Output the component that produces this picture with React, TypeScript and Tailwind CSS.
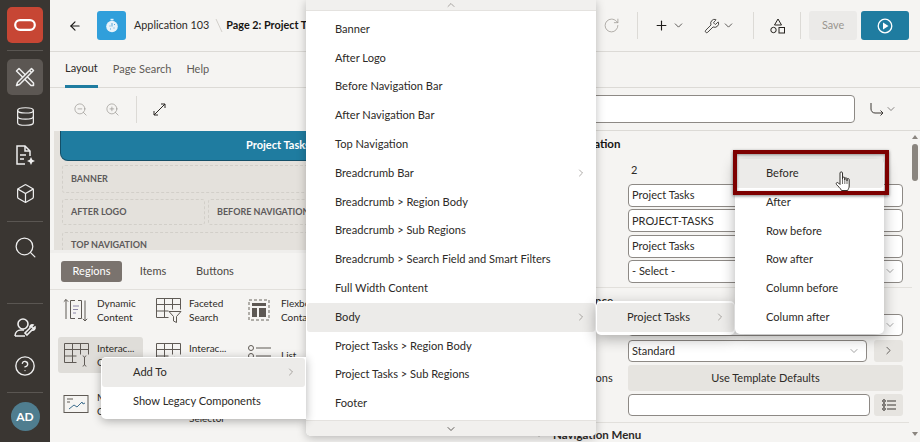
import React from "react";
import { ChevronDown, ChevronRight, ChevronUp, ArrowLeft, RotateCw, Plus, Wrench, ZoomIn, ZoomOut, Database, Box, Search, CircleHelp } from "lucide-react";

const font = "font-['Lato','Noto_Sans',sans-serif]";

function Logo() {
  return <svg width="22" height="12" viewBox="0 0 22 12" fill="none"><rect x="1.2" y="1.2" width="19.6" height="9.6" rx="4.8" stroke="#fff" strokeWidth="2.2" /></svg>;
}
function ToolsIcon() {
  return (
    <svg width="20" height="20" viewBox="0 0 20 20" fill="none" stroke="#eee" strokeWidth="1.5" strokeLinejoin="round">
      <path d="M1.500 4L4 1.500 18.500 16v2.500H16z" />
      <path d="M16.500 1.500l2 2L4.500 17.500 1.500 18.500l1-3z" fill="#5c5753" />
      <path d="M14.500 3.500l2 2" />
    </svg>
  );
}
function DocSpark() {
  return (
    <svg width="22" height="22" viewBox="0 0 22 22" fill="none" stroke="#eee" strokeWidth="1.5">
      <path d="M11 20H3V2h8l5 5v5" /><path d="M11 2v5h5" /><path d="M6 11h6M6 15h4" />
      <path d="M17 13l1.300 2.700L21 17l-2.700 1.300L17 21l-1.300-2.700L13 17l2.700-1.300z" fill="#eee" stroke="none" />
    </svg>
  );
}
function UserWrench() {
  return (
    <svg width="24" height="22" viewBox="0 0 24 22" fill="none" stroke="#eee" strokeWidth="1.6">
      <circle cx="10" cy="7" r="5" /><path d="M2 19c0-4 3-6 6-6h3M2 19h10" />
      <path d="M14 18l5-5c2 .5 3.500-1 3-3l-2 1.500-1.500-1.500 1.500-2c-2-.5-3.500 1-3 3l-5 5z" />
    </svg>
  );
}
function Grid({ children }: { children?: React.ReactNode }) {
  return (
    <svg width="28" height="26" viewBox="0 0 28 26" fill="none" stroke="#5f5a55" strokeWidth="1">
      <path d="M1.500 1.500h24v11M1.500 1.500v19h12M9.500 1.500v19M17.500 1.500v11M1.500 7.500h24M1.500 14h12" />
      {children}
    </svg>
  );
}

function Tile({ active, icon, lines }: { active?: boolean; icon: React.ReactNode; lines: string[] }) {
  return (
    <div className={`flex items-center gap-[5px] h-[36px] w-[85px] shrink-0 rounded-[3px] pl-[5px] ${active ? "bg-[#dfddd9]" : ""}`}>
      <div className="w-[29px] shrink-0 flex justify-start">{icon}</div>
      <div className="text-[10px] leading-[14px] text-[#2d2a27] whitespace-nowrap">
        {lines.map((l) => <div key={l}>{l}</div>)}
      </div>
    </div>
  );
}

function Slot({ label, className = "" }: { label: string; className?: string }) {
  return (
    <div className={`border border-dashed border-[#d2cfc9] rounded-[3px] flex items-center pl-[8px] text-[9px] font-bold text-[#5d5a5a] whitespace-nowrap overflow-hidden ${className}`}>
      {label}
    </div>
  );
}

function Field({ value, w = "w-[275px]", chev, h = "h-[23px]" }: { value: string; w?: string; chev?: boolean; h?: string }) {
  return (
    <div className={`${w} ${h} shrink-0 bg-white border border-[#8d8985] rounded-[4px] flex items-center justify-between px-[3px] text-[11px] text-[#2d2a27]`}>
      <span>{value}</span>
      {chev && <ChevronDown size={12} strokeWidth={1.2} className="mr-[3px] text-[#666]" />}
    </div>
  );
}

function Row({ label, indent, children }: { label?: string; indent?: boolean; children: React.ReactNode }) {
  return (
    <div className="flex shrink-0 items-center">
      <div className={`w-[76px] shrink-0 whitespace-nowrap ${indent ? "pl-[22px]" : ""}`}>{label}</div>
      {children}
    </div>
  );
}

function MenuItem({ label, active, arrow, h = "h-[28.8px]", pl = "pl-[28px]" }: { label: string; active?: boolean; arrow?: boolean; h?: string; pl?: string }) {
  return (
    <div className={`${h} ${pl} mx-[1px] shrink-0 flex items-center justify-between pr-[8px] text-[11.1px] text-[#2d2a27] whitespace-nowrap rounded-[3px] ${active ? "bg-[#ecebe9]" : ""}`}>
      <span>{label}</span>
      {arrow && <ChevronRight size={12} strokeWidth={1.2} className="text-[#77726d]" />}
    </div>
  );
}

export default function App() {
  return (
    <div className={`relative w-[920px] h-[442px] overflow-hidden flex bg-[#f5f4f2] ${font}`}>
      {/* Rail */}
      <aside className="w-[50px] shrink-0 bg-[#3a3632] flex flex-col items-center text-[#eeeeee]">
        <div className="mt-[7px] w-[36px] h-[36px] rounded-[5px] bg-[#c74634] flex items-center justify-center"><Logo /></div>
        <div className="w-[36px] h-px bg-[#5a5652] mt-[7px]" />
        <div className="mt-[8px] w-[36px] h-[36px] rounded-[5px] bg-[#5c5753] flex items-center justify-center"><ToolsIcon /></div>
        <div className="mt-[8px] h-[26px] flex items-center"><Database size={21} strokeWidth={1.4} /></div>
        <div className="mt-[14px] h-[24px] flex items-center"><DocSpark /></div>
        <div className="mt-[15px] h-[22px] flex items-center"><Box size={21} strokeWidth={1.4} /></div>
        <div className="w-[36px] h-px bg-[#5a5652] mt-[17px]" />
        <div className="mt-[13px] h-[24px] flex items-center"><Search size={25} strokeWidth={1.2} /></div>
        <div className="w-[36px] h-px bg-[#5a5652] mt-[44px]" />
        <div className="mt-[12px] h-[24px] flex items-center"><UserWrench /></div>
        <div className="mt-[14px] h-[24px] flex items-center"><CircleHelp size={22} strokeWidth={1.5} /></div>
        <div className="w-[36px] h-px bg-[#5a5652] mt-[14px]" />
        <div className="mt-[9px] w-[29px] h-[29px] shrink-0 rounded-full bg-[#4f7d8f] flex items-center justify-center text-[12px] font-bold text-white">AD</div>
      </aside>

      <div className="flex-1 min-w-0 flex flex-col">
        {/* Header */}
        <header className="h-[52px] shrink-0 border-b border-[#dcdad6] flex items-center text-[10.8px] text-[#2d2a27]">
          <ArrowLeft size={14} strokeWidth={2} className="ml-[18px] text-[#1a1816]" />
          <div className="ml-[15px] w-[29px] h-[29px] rounded-[3px] bg-[#309fdb] flex items-center justify-center">
            <svg width="14" height="15" viewBox="0 0 14 15"><circle cx="7" cy="8.500" r="5.800" fill="#e8f3fa" /><rect x="5.500" y="0.800" width="3" height="1.600" fill="#e8f3fa" /><path d="M7 5v3.500M4.500 8h1M8.500 10h1M5 11h1M9 6.500h1" stroke="#5ba9d8" strokeWidth="1" /></svg>
          </div>
          <span className="ml-[8px] whitespace-nowrap">Application 103</span>
          <svg width="8" height="13" viewBox="0 0 8 13" className="ml-[6px]" fill="none" stroke="#d2cfca"><path d="M1 0l6 13" /></svg>
          <span className="ml-[3px] font-bold whitespace-nowrap text-[#161513]">Page 2: Project Tasks</span>
          <div className="flex-1" />
          <RotateCw size={17} strokeWidth={1.1} className="text-[#9f9b96]" />
          <div className="w-px h-[27px] bg-[#dcdad6] ml-[17px]" />
          <Plus size={15} strokeWidth={1.8} className="ml-[16px] text-[#1f1d1b]" />
          <ChevronDown size={13} strokeWidth={1.4} className="ml-[3px]" />
          <Wrench size={16} strokeWidth={1.2} className="ml-[19px] text-[#1f1d1b]" />
          <ChevronDown size={13} strokeWidth={1.4} className="ml-[2px]" />
          <div className="w-px h-[27px] bg-[#dcdad6] ml-[18px]" />
          <svg width="16" height="16" viewBox="0 0 16 16" fill="none" stroke="#26231f" strokeWidth="1" className="ml-[16px]"><path d="M8 1l3.500 6h-7z" /><circle cx="3.500" cy="12" r="2.700" /><rect x="9" y="9.500" width="5.500" height="5.500" /></svg>
          <div className="w-px h-[27px] bg-[#dcdad6] ml-[14px]" />
          <div className="ml-[8px] w-[48px] h-[29px] rounded-[3px] bg-[#ebeae8] text-[#99958f] flex items-center justify-center">Save</div>
          <div className="ml-[4px] mr-[11px] w-[48px] h-[29px] rounded-[3px] bg-[#1f7ca0] flex items-center justify-center">
            <svg width="16" height="16" viewBox="0 0 16 16" fill="none"><circle cx="8" cy="8" r="6.800" stroke="#fff" strokeWidth="1.300" /><path d="M6 4.500l5.500 3.500L6 11.500z" fill="#fff" /></svg>
          </div>
        </header>

        <div className="flex-1 min-h-0 flex">
          {/* Left pane */}
          <div className="w-[480px] shrink-0 flex flex-col">
            <div className="h-[36px] shrink-0 border-b border-[#dcdad6] flex text-[11px] text-[#5f5b57] pl-[15px] gap-[15px]">
              <div className="h-[36px] border-b-[3px] border-[#1f7ca0] flex items-center text-[#2d2a27]">Layout</div>
              <div className="h-[35px] flex items-center">Page Search</div>
              <div className="h-[35px] flex items-center">Help</div>
            </div>
            <div className="h-[43px] shrink-0 flex items-center pl-[23px]">
              <ZoomOut size={15} strokeWidth={1} className="text-[#8f8b86]" />
              <ZoomIn size={15} strokeWidth={1} className="ml-[17px] text-[#8f8b86]" />
              <div className="ml-[16px] w-px h-[27px] bg-[#dcdad6]" />
              <svg width="13" height="13" viewBox="0 0 13 13" fill="none" stroke="#2b2724" strokeWidth="1" className="ml-[16px]"><path d="M1 12l11-11M8 1h4v4M1 8v4h4" /></svg>
            </div>
            {/* Canvas */}
            <div className="h-[119px] shrink-0 ml-[4px] bg-[#e4e1dc] pl-[6px] overflow-hidden flex flex-col">
              <div className="h-[30px] shrink-0 bg-[#1f7ca0] rounded-b-[8px] border border-t-0 border-[#144f68] flex items-center justify-center text-white font-bold text-[11px] w-[436px]">Project Tasks</div>
              <Slot label="BANNER" className="mt-[4px] h-[28px] shrink-0 w-[440px] ml-[2px]" />
              <div className="flex mt-[6px] shrink-0 ml-[2px] gap-[3px]">
                <Slot label="AFTER LOGO" className="h-[26px] w-[143px]" />
                <Slot label="BEFORE NAVIGATION BAR" className="h-[26px] w-[143px]" />
              </div>
              <Slot label="TOP NAVIGATION" className="mt-[7px] h-[26px] shrink-0 w-[440px] ml-[2px]" />
            </div>
            {/* Gallery */}
            <div className="flex-1 min-h-0 border-t-[3px] border-[#efeeec] flex flex-col">
              <div className="h-[37px] shrink-0 border-b border-[#e2e0dc] flex items-center pl-[11px] text-[11px] text-[#4b4743]">
                <div className="h-[21px] w-[61px] rounded-[3px] bg-[#7a736e] text-white flex items-center justify-center">Regions</div>
                <div className="h-[21px] w-[62px] flex items-center justify-center">Items</div>
                <div className="h-[21px] w-[62px] flex items-center justify-center">Buttons</div>
              </div>
              <div className="flex-1 min-h-0 flex flex-col pl-[8px] pt-[2px]">
                <div className="flex gap-[7px]">
                  <Tile lines={["Dynamic", "Content"]} icon={<svg width="26" height="26" viewBox="0 0 26 26" fill="none" stroke="#5f5a55"><path d="M3 22V2.500M.8 4.700L3 2.500l2.200 2.200M22 3.500V24M19.800 21.800L22 24l2.200-2.200" /><path d="M12 3.500H7.500v18H12M15 3.500h3.500v18H15" /><path d="M10 9h6M10 12.500h5M10 16h3" stroke="#8c86a8" /></svg>} />
                  <Tile lines={["Faceted", "Search"]} icon={<Grid><path d="M14 14.500h12l-4.500 5v6l-3-1.500v-4.500z" /></Grid>} />
                  <Tile lines={["Flexbox", "Container"]} icon={<svg width="24" height="24" viewBox="0 0 24 24" fill="none"><rect x="2" y="2" width="20" height="20" stroke="#6b665f" strokeDasharray="3 2" /><rect x="5" y="5" width="14" height="3" fill="#5d5853" /><rect x="5" y="10" width="5" height="9" fill="#5d5853" /><rect x="12" y="10" width="7" height="9" fill="#5d5853" /></svg>} />
                </div>
                <div className="flex gap-[7px] mt-[9px]">
                  <Tile active lines={["Interac...", "Grid"]} icon={<Grid><path d="M20 13.500c0 1 1 1.500 1.500 1.500s1.500-.5 1.500-1.500M21.500 15v8M20 24.500c0-1 1-1.500 1.500-1.500s1.500.5 1.500 1.500" /></Grid>} />
                  <Tile lines={["Interac...", "Report"]} icon={<Grid><path d="M19 15l5 4-5 4z" /></Grid>} />
                  <Tile lines={["List"]} icon={<svg width="26" height="22" viewBox="0 0 26 22" fill="none" stroke="#5f5a55"><circle cx="4" cy="4" r="2.500" /><circle cx="4" cy="12" r="2.500" /><path d="M9 4h15M9 12h15M9 20h15" /></svg>} />
                </div>
                <div className="flex gap-[7px] mt-[13px]">
                  <Tile lines={["Map", "Chart"]} icon={<svg width="26" height="20" viewBox="0 0 26 20" fill="none" stroke="#5f5a55"><rect x="1" y="1.500" width="24" height="17" /><path d="M4 5h6M4 8h3" /><path d="M6 15l5-4 3 2 5-5 1 2 2-1" stroke="#3f6f8f" /></svg>} />
                  <Tile lines={["Region", "Display", "Selector"]} icon={null} />
                </div>
              </div>
            </div>
          </div>

          {/* Right pane */}
          <div className="flex-1 min-w-0 flex flex-col">
            <div className="h-[36px] shrink-0 border-b border-[#dcdad6]" />
            <div className="h-[43px] shrink-0 flex items-center border-b border-[#dcdad6] pl-[10px]">
              <div className="w-[315px] h-[28px] bg-white border border-[#8d8985] rounded-[4px]" />
              <svg width="14" height="14" viewBox="0 0 14 14" fill="none" stroke="#3c3835" strokeWidth="1" className="ml-[15px]"><path d="M1 1v6c0 2 1.500 4 4 4h8M10.500 8.500L13 11l-2.500 2.500" /></svg>
              <ChevronDown size={12} strokeWidth={1.2} className="ml-[1px] text-[#3c3835]" />
            </div>
            <div className="flex-1 min-h-0 flex overflow-hidden">
              <div className="flex-1 min-w-0 pl-[22px] flex flex-col text-[11px] text-[#2d2a27]">
                <div className="h-[25px] shrink-0 font-bold text-[11.5px] pt-[4px] text-[#161513] whitespace-nowrap">Identification</div>
                <Row><div className="h-[28px] pl-[3px] flex items-center">2</div></Row>
                <div className="flex flex-col gap-[2.300px] shrink-0 pb-[4px] border-b border-[#e2e0dc] w-[360px]">
                  <Row><Field value="Project Tasks" /></Row>
                  <Row><Field value="PROJECT-TASKS" /></Row>
                  <Row><Field value="Project Tasks" /></Row>
                  <Row><Field value="- Select -" chev /></Row>
                </div>
                <div className="h-[26px] shrink-0 font-bold text-[11.5px] flex items-center whitespace-nowrap">Appearance</div>
                <div className="flex flex-col shrink-0">
                  <Row><Field value="" chev h="h-[22px]" /></Row>
                  <div className="mt-[4px]"><Row label="Template">
                    <Field value="Standard" chev w="w-[239px]" h="h-[22px]" />
                    <div className="ml-[7px] w-[29px] h-[22px] rounded-[3px] bg-[#e6e4e0] flex items-center justify-center"><ChevronRight size={13} strokeWidth={1.3} /></div>
                  </Row></div>
                  <div className="mt-[3px]"><Row label="Options" indent>
                    <div className="h-[26px] w-[275px] rounded-[3px] bg-[#e6e4e0] flex items-center justify-center">Use Template Defaults</div>
                  </Row></div>
                  <div className="mt-[3px]"><Row>
                    <Field value="" w="w-[242px]" h="h-[22px]" />
                    <div className="ml-[4px] w-[29px] h-[22px] rounded-[3px] bg-[#e6e4e0] flex items-center justify-center">
                      <svg width="14" height="12" viewBox="0 0 14 12" fill="none" stroke="#3c3835"><circle cx="2" cy="2" r="1.300" /><circle cx="2" cy="6" r="1.300" /><circle cx="2" cy="10" r="1.300" /><path d="M5 2h9M5 6h9M5 10h9" /></svg>
                    </div>
                  </Row></div>
                </div>
                <div className="mt-[6px] shrink-0 border-t border-[#e2e0dc] -ml-[18px] pt-[3px] w-[375px] font-bold text-[11.5px] flex items-center gap-[9px] whitespace-nowrap">
                  <ChevronDown size={10} strokeWidth={1.5} /> Navigation Menu
                </div>
              </div>
              <div className="w-[9px] shrink-0 mr-[1px] flex flex-col items-center pt-[4px] justify-between pb-[6px]">
                <div className="flex flex-col items-center gap-[5px]">
                  <div className="w-0 h-0 border-x-[3px] border-x-transparent border-b-[4px] border-b-[#8a857f]" />
                  <div className="w-[6px] h-[37px] rounded-[3px] bg-[#8a857f]" />
                </div>
                <div className="w-0 h-0 border-x-[3px] border-x-transparent border-t-[4px] border-t-[#8a857f]" />
              </div>
            </div>
          </div>
        </div>
      </div>

      {/* Main dropdown menu */}
      <div className="absolute left-[306px] top-0 w-[290px] h-[436px] bg-white rounded-b-[5px] shadow-[0_2px_10px_rgba(0,0,0,0.25)] flex flex-col">
        <div className="h-[11px] shrink-0 bg-[#f1f0ee] flex justify-center items-start border-b border-[#e4e2df]"><ChevronUp size={12} strokeWidth={1.2} className="-mt-[1px] text-[#77726d]" /></div>
        <div className="h-[3.800px] shrink-0" />
        {["Banner", "After Logo", "Before Navigation Bar", "After Navigation Bar", "Top Navigation"].map((l) => <MenuItem key={l} label={l} />)}
        <MenuItem label="Breadcrumb Bar" arrow />
        {["Breadcrumb > Region Body", "Breadcrumb > Sub Regions", "Breadcrumb > Search Field and Smart Filters", "Full Width Content"].map((l) => <MenuItem key={l} label={l} />)}
        <MenuItem label="Body" arrow active />
        {["Project Tasks > Region Body", "Project Tasks > Sub Regions", "Footer"].map((l) => <MenuItem key={l} label={l} />)}
        <div className="flex-1" />
        <div className="h-[16px] shrink-0 bg-[#f1f0ee] border-t border-[#e4e2df] rounded-b-[5px] flex justify-center items-center"><ChevronDown size={12} strokeWidth={1.6} className="text-[#3c3835]" /></div>
      </div>

      {/* Context menu */}
      <div className="absolute left-[101px] top-[357px] w-[205px] h-[62px] bg-white rounded-l-[5px] shadow-[0_2px_10px_rgba(0,0,0,0.3)] pt-[1px]">
        <MenuItem label="Add To" arrow active pl="pl-[31px]" />
        <MenuItem label="Show Legacy Components" pl="pl-[31px]" />
      </div>

      {/* Submenu */}
      <div className="absolute left-[596px] top-[301px] w-[139px] h-[34px] bg-white rounded-[5px] shadow-[0_4px_14px_rgba(0,0,0,0.3)] pt-[2px]">
        <MenuItem label="Project Tasks" arrow active pl="pl-[30px]" />
      </div>

      {/* Position menu */}
      <div className="absolute left-[735px] top-[159px] w-[149px] h-[175px] bg-white rounded-[5px] shadow-[0_4px_14px_rgba(0,0,0,0.3)]">
        <MenuItem label="Before" active pl="pl-[30px]" />
        {["After", "Row before", "Row after", "Column before", "Column after"].map((l) => <MenuItem key={l} label={l} pl="pl-[30px]" />)}
      </div>

      {/* Callout */}
      <div className="absolute left-[733px] top-[150px] w-[156px] h-[45px] border-[4px] border-[#7d0000] shadow-[0_1px_3px_rgba(0,0,0,0.5),inset_0_1px_3px_rgba(0,0,0,0.4)]" />
      <svg className="absolute left-[835px] top-[171px]" width="17" height="22" viewBox="0 0 17 22" fill="#fff" stroke="#33302c" strokeWidth="1" strokeLinejoin="round">
        <path d="M5 2c0-1.500 2.500-1.500 2.500 0v6.500V7c0-1.200 2.300-1.200 2.300 0v2-1.300c0-1.200 2.200-1.200 2.200 0V10V8.500c0-1.200 2.200-1.200 2.200 0V15c0 2-1 3-1.500 4.500H6.500C5.500 17 3 15.500 1.500 13.500c-1-1.500.8-2.800 2-1.500L5 13.500z" />
        <path d="M7.500 9v4M9.800 9v4M12 10v3" strokeWidth="0.700" />
      </svg>
    </div>
  );
}
